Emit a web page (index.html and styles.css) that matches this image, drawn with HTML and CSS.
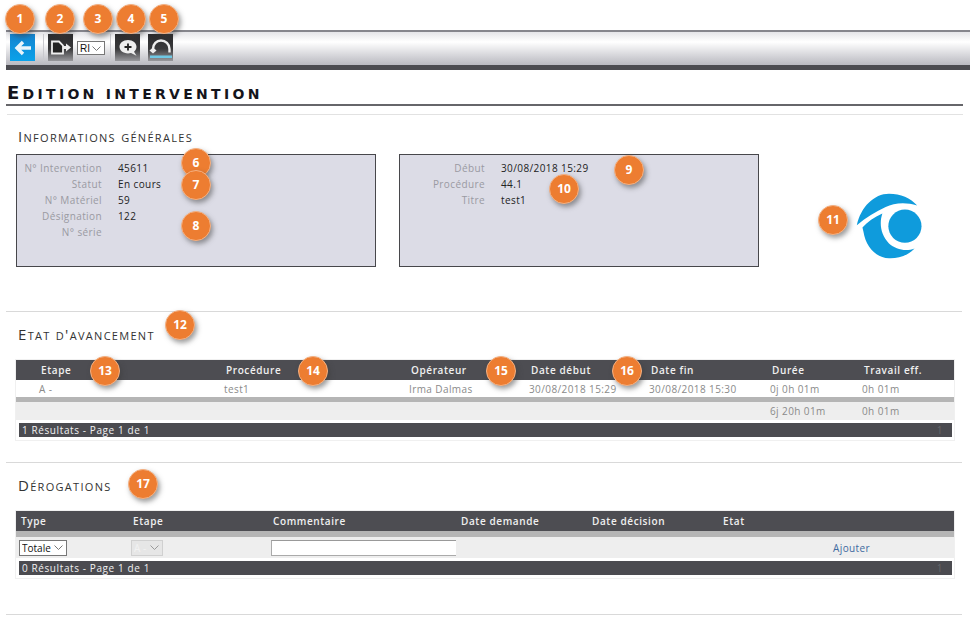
FILE: index.html
```html
<!DOCTYPE html>
<html lang="fr">
<head>
  <meta charset="UTF-8" />
  <title>Edition intervention</title>
  <link rel="stylesheet" href="styles.css">
</head>
<body>
  <div class="toolbar">
    <a class="tool tool-back">
      <svg width="25" height="27" viewBox="0 0 25 27"><path d="M21 14H8M13 8l-6 6 6 6" fill="none" stroke="#e8f4fb" stroke-width="3.4"/></svg>
    </a>
    <span class="sep"></span>
    <a class="tool">
      <svg width="25" height="27" viewBox="0 0 25 27"><path d="M4 7.500h7l4 4v8H4z" fill="#222" stroke="#eee" stroke-width="1.800"/><path d="M15 12h3V9.500l5 4-5 4V15h-3z" fill="#eee"/></svg>
    </a>
    <select class="mini-select"><option>RI</option></select>
    <span class="sep sep-short"></span>
    <a class="tool">
      <svg width="25" height="27" viewBox="0 0 25 27"><path d="M13 6c5 0 8.500 3 8.500 6.800 0 2-1 3.700-2.500 4.900l2.500 4-5.500-2.700c-1 .3-2 .4-3 .4-5 0-8.500-3-8.500-6.600S8 6 13 6z" fill="#eee"/><path d="M13 9.500v7M9.500 13h7" stroke="#222" stroke-width="1.800"/></svg>
    </a>
    <a class="tool tool-last">
      <svg width="25" height="27" viewBox="0 0 25 27"><path d="M5 17v-2c0-5 3.500-8.500 8-8.500s8.500 3.500 8.500 8.500v3.500" fill="none" stroke="#eee" stroke-width="2.400"/><path d="M1.500 16.500l3.500-3 3.500 3-3.500 3z" fill="#eee"/><rect x="2" y="21.500" width="22" height="2.500" fill="#6fc8e4"/></svg>
    </a>
  </div>

  <h1 class="page-title">Edition intervention</h1>
  <div class="title-rule"></div>

  <h2 class="section-title first">Informations générales</h2>
  <div class="info-row">
    <dl class="info-box">
      <dt>N° Intervention</dt><dd>45611</dd>
      <dt>Statut</dt><dd>En cours</dd>
      <dt>N° Matériel</dt><dd>59</dd>
      <dt>Désignation</dt><dd>122</dd>
      <dt>N° série</dt><dd></dd>
    </dl>
    <dl class="info-box">
      <dt>Début</dt><dd>30/08/2018 15:29</dd>
      <dt>Procédure</dt><dd>44.1</dd>
      <dt>Titre</dt><dd>test1</dd>
    </dl>
    <svg class="logo" width="70" height="68" viewBox="130 35 210 205">
      <path d="M138 135C150 80 190 40 235 40c35 0 65 12 85 36-35-12-70-8-95 4-30 14-60 32-87 55z" fill="#0f9bdc"/>
      <path d="M215 100c-10 30-5 65 20 90 20 18 50 25 77 15-22 23-50 31-77 30-40-2-70-35-77-80l-3-13c15-17 35-30 60-42z" fill="#0f9bdc"/>
      <circle cx="283" cy="138" r="50" fill="#0f9bdc"/>
    </svg>
  </div>

  <hr class="rule rule-a">

  <h2 class="section-title">Etat d'avancement</h2>
  <div class="grid-wrap">
    <table class="grid grid-avancement">
      <colgroup><col class="c185"><col class="c185"><col class="c120"><col class="c120"><col class="c121"><col class="c92"><col class="c115"></colgroup>
      <thead>
        <tr><th>Etape</th><th>Procédure</th><th>Opérateur</th><th>Date début</th><th>Date fin</th><th>Durée</th><th>Travail eff.</th></tr>
      </thead>
      <tbody>
        <tr class="row-white"><td>A -</td><td>test1</td><td>Irma Dalmas</td><td>30/08/2018 15:29</td><td>30/08/2018 15:30</td><td>0j 0h 01m</td><td>0h 01m</td></tr>
        <tr class="row-band"><td colspan="7"></td></tr>
        <tr class="row-total"><td></td><td></td><td></td><td></td><td></td><td>6j 20h 01m</td><td>0h 01m</td></tr>
      </tbody>
    </table>
    <div class="pager"><span>1 Résultats - Page 1 de 1</span><span class="pager-num">1</span></div>
  </div>

  <hr class="rule rule-b">

  <h2 class="section-title">Dérogations</h2>
  <div class="grid-wrap">
    <table class="grid grid-derog">
      <colgroup><col class="c112"><col class="c140"><col class="c188"><col class="c131"><col class="c131"><col class="c112"><col class="c124"></colgroup>
      <thead>
        <tr><th>Type</th><th>Etape</th><th>Commentaire</th><th>Date demande</th><th>Date décision</th><th>Etat</th><th></th></tr>
      </thead>
      <tbody>
        <tr class="row-band"><td colspan="7"></td></tr>
        <tr class="row-form">
          <td><select class="form-select"><option>Totale</option></select></td>
          <td><select class="form-select form-select-off" disabled><option>A -</option></select></td>
          <td><input class="form-input" type="text"></td>
          <td></td><td></td><td></td>
          <td><a class="add-link">Ajouter</a></td>
        </tr>
      </tbody>
    </table>
    <div class="pager"><span>0 Résultats - Page 1 de 1</span><span class="pager-num">1</span></div>
  </div>

  <hr class="rule rule-c">

  <span class="badge b1">1</span>
  <span class="badge b2">2</span>
  <span class="badge b3">3</span>
  <span class="badge b4">4</span>
  <span class="badge b5">5</span>
  <span class="badge b6">6</span>
  <span class="badge b7">7</span>
  <span class="badge b8">8</span>
  <span class="badge b9">9</span>
  <span class="badge b10">10</span>
  <span class="badge b11">11</span>
  <span class="badge b12">12</span>
  <span class="badge b13">13</span>
  <span class="badge b14">14</span>
  <span class="badge b15">15</span>
  <span class="badge b16">16</span>
  <span class="badge b17">17</span>
</body>
</html>
```

FILE: styles.css
```css
html, body {
  height: 620px;
  overflow: hidden;
}
body {
  position: relative;
  margin: 0;
  padding: 30px 0 0 6px;
  box-sizing: border-box;
  background: #ffffff;
  font-family: "Open Sans", sans-serif;
  font-size: 10px;
  letter-spacing: 0.4px;
  color: #222;
}

/* barre d'outils */
.toolbar {
  display: flex;
  align-items: flex-start;
  height: 40px;
  box-sizing: border-box;
  padding: 2px 0 0 4px;
  border-top: 2px solid #85858c;
  border-bottom: 5px solid #4b4b50;
  background: linear-gradient(#e4e4e8, #ffffff 30%, #b9b9c0);
}
.tool {
  display: block;
  width: 25px;
  height: 27px;
  background: linear-gradient(#2a2a2c, #3a3a3c 55%, #98989c);
}
.tool-back {
  background: linear-gradient(#1483cf, #0aa2ea);
}
.tool-last {
  margin-left: 8px;
}
.sep {
  width: 1px;
  height: 27px;
  margin: 0 4px 0 8px;
  background: #c9c9ce;
}
.sep-short {
  margin-left: 5px;
}
.mini-select {
  appearance: none;
  width: 28px;
  height: 14px;
  margin: 7px 0 0 4px;
  padding: 0 0 0 2px;
  border: 1px solid #777;
  background: #fff url("data:image/svg+xml,%3Csvg xmlns='http://www.w3.org/2000/svg' width='9' height='5'%3E%3Cpath d='M.5.5l4 4 4-4' fill='none' stroke='%23777'/%3E%3C/svg%3E") no-repeat right 3px center;
  font: 10px "Liberation Sans", sans-serif;
  color: #111;
}

/* titres */
.page-title {
  height: 34px;
  margin: 0 7px 0 0;
  padding-left: 1px;
  border-bottom: 2px solid #66666a;
  box-sizing: content-box;
  font-family: "DejaVu Sans", sans-serif;
  font-size: 14px;
  font-weight: bold;
  text-transform: uppercase;
  letter-spacing: 3.3px;
  line-height: 46px;
  color: #15151c;
}
.page-title::first-letter {
  font-size: 18px;
}
.title-rule {
  height: 1px;
  margin: 8px 7px 0 1px;
  background: #e2e2e2;
}
.section-title {
  height: 20px;
  margin: 0 0 16px 12px;
  font-family: "Open Sans", sans-serif;
  font-size: 15px;
  font-weight: normal;
  font-variant: small-caps;
  letter-spacing: 1.3px;
  line-height: 20px;
  color: #333;
}
.section-title.first {
  margin-top: 11px;
  margin-bottom: 8px;
}

/* blocs d'informations */
.info-row {
  display: flex;
  gap: 23px;
  margin-left: 10px;
}
.info-box {
  display: grid;
  grid-template-columns: 85px 1fr;
  grid-auto-rows: 16px;
  column-gap: 16px;
  align-items: center;
  align-content: start;
  width: 360px;
  height: 113px;
  margin: 0;
  padding-top: 5px;
  box-sizing: border-box;
  border: 1px solid #47474b;
  background: #dcdce6;
}
.info-box dt {
  color: #9a9aa2;
  text-align: right;
  white-space: nowrap;
}
.info-box dd {
  margin: 0;
  color: #222;
}
.logo {
  margin: 38px 0 0 72px;
}

.rule {
  height: 1px;
  margin: 0 8px 0 0;
  border: 0;
  background: #d9d9d9;
}
.rule-a {
  margin-top: 44px;
  margin-bottom: 12px;
}
.rule-b {
  margin-top: 22px;
  margin-bottom: 12px;
}
.rule-c {
  margin-top: 36px;
}

/* grilles */
.grid-wrap {
  width: 938px;
  margin-left: 10px;
  padding-bottom: 3px;
  box-shadow: 0 0 0 1px #f0f0f0;
}
.grid {
  width: 938px;
  table-layout: fixed;
  border-collapse: collapse;
}
.c92 { width: 92px; }
.c112 { width: 112px; }
.c115 { width: 115px; }
.c120 { width: 120px; }
.c121 { width: 121px; }
.c124 { width: 124px; }
.c131 { width: 131px; }
.c140 { width: 140px; }
.c185 { width: 185px; }
.c188 { width: 188px; }
.grid th {
  height: 20px;
  padding: 0 0 0 25px;
  background: #4d4d52;
  color: #f0f0f0;
  font-weight: 600;
  letter-spacing: 0.6px;
  text-align: left;
}
.grid td {
  padding: 0 0 0 23px;
  color: #8a8a8a;
  white-space: nowrap;
}
.row-white td {
  height: 17px;
  background: #fff;
}
.row-band td {
  height: 5px;
  padding: 0;
  background: #b5b5b5;
}
.row-total td {
  height: 18px;
  background: #eeeeee;
}
.grid-derog th {
  padding-left: 5px;
}
.grid-derog .row-band td {
  height: 6px;
  padding: 0;
}
.grid-derog .row-form td {
  height: 21px;
  padding-left: 3px;
  background: #eeeeee;
}
.form-select {
  appearance: none;
  display: block;
  width: 48px;
  height: 16px;
  padding: 0 0 0 2px;
  border: 1px solid #777;
  background: #fff url("data:image/svg+xml,%3Csvg xmlns='http://www.w3.org/2000/svg' width='9' height='5'%3E%3Cpath d='M.5.5l4 4 4-4' fill='none' stroke='%23777'/%3E%3C/svg%3E") no-repeat right 3px center;
  font: 10px "Open Sans", sans-serif;
  color: #111;
}
.form-select-off {
  width: 32px;
  border-color: #c4c4c4;
  background-color: #e4e4e4;
  color: #f4f4f4;
}
.form-input {
  display: block;
  width: 186px;
  height: 16px;
  padding: 0;
  box-sizing: border-box;
  border: 1px solid #aaa;
  border-top-color: #999;
  background: #fff;
}
.grid .add-link {
  color: #3e6aa0;
}
.pager {
  display: flex;
  justify-content: space-between;
  height: 14px;
  margin: 3px 2px 0 3px;
  padding: 0 9px 0 3px;
  background: #4b4b50;
  color: #f0f0f0;
  letter-spacing: 0.6px;
  line-height: 14px;
}
.pager-num {
  color: #66666a;
}

/* pastilles numerotees */
.badge {
  position: absolute;
  width: 30px;
  height: 30px;
  border-radius: 50%;
  box-sizing: border-box;
  border: 1px solid #f4b183;
  background: #ed7d31;
  box-shadow: 2px 3px 5px rgba(60, 60, 60, 0.5);
  color: #fff;
  font-family: "Open Sans", sans-serif;
  font-size: 12px;
  font-weight: bold;
  letter-spacing: 0;
  line-height: 28px;
  text-align: center;
}
.b1 { left: 5px; top: 4px; }
.b2 { left: 45px; top: 4px; }
.b3 { left: 83px; top: 4px; }
.b4 { left: 116px; top: 4px; }
.b5 { left: 149px; top: 4px; }
.b6 { left: 181px; top: 148px; }
.b7 { left: 181px; top: 170px; }
.b8 { left: 181px; top: 211px; }
.b9 { left: 614px; top: 155px; }
.b10 { left: 549px; top: 174px; }
.b11 { left: 818px; top: 205px; }
.b12 { left: 165px; top: 310px; }
.b13 { left: 90px; top: 356px; }
.b14 { left: 298px; top: 356px; }
.b15 { left: 486px; top: 356px; }
.b16 { left: 612px; top: 356px; }
.b17 { left: 128px; top: 469px; }
```
